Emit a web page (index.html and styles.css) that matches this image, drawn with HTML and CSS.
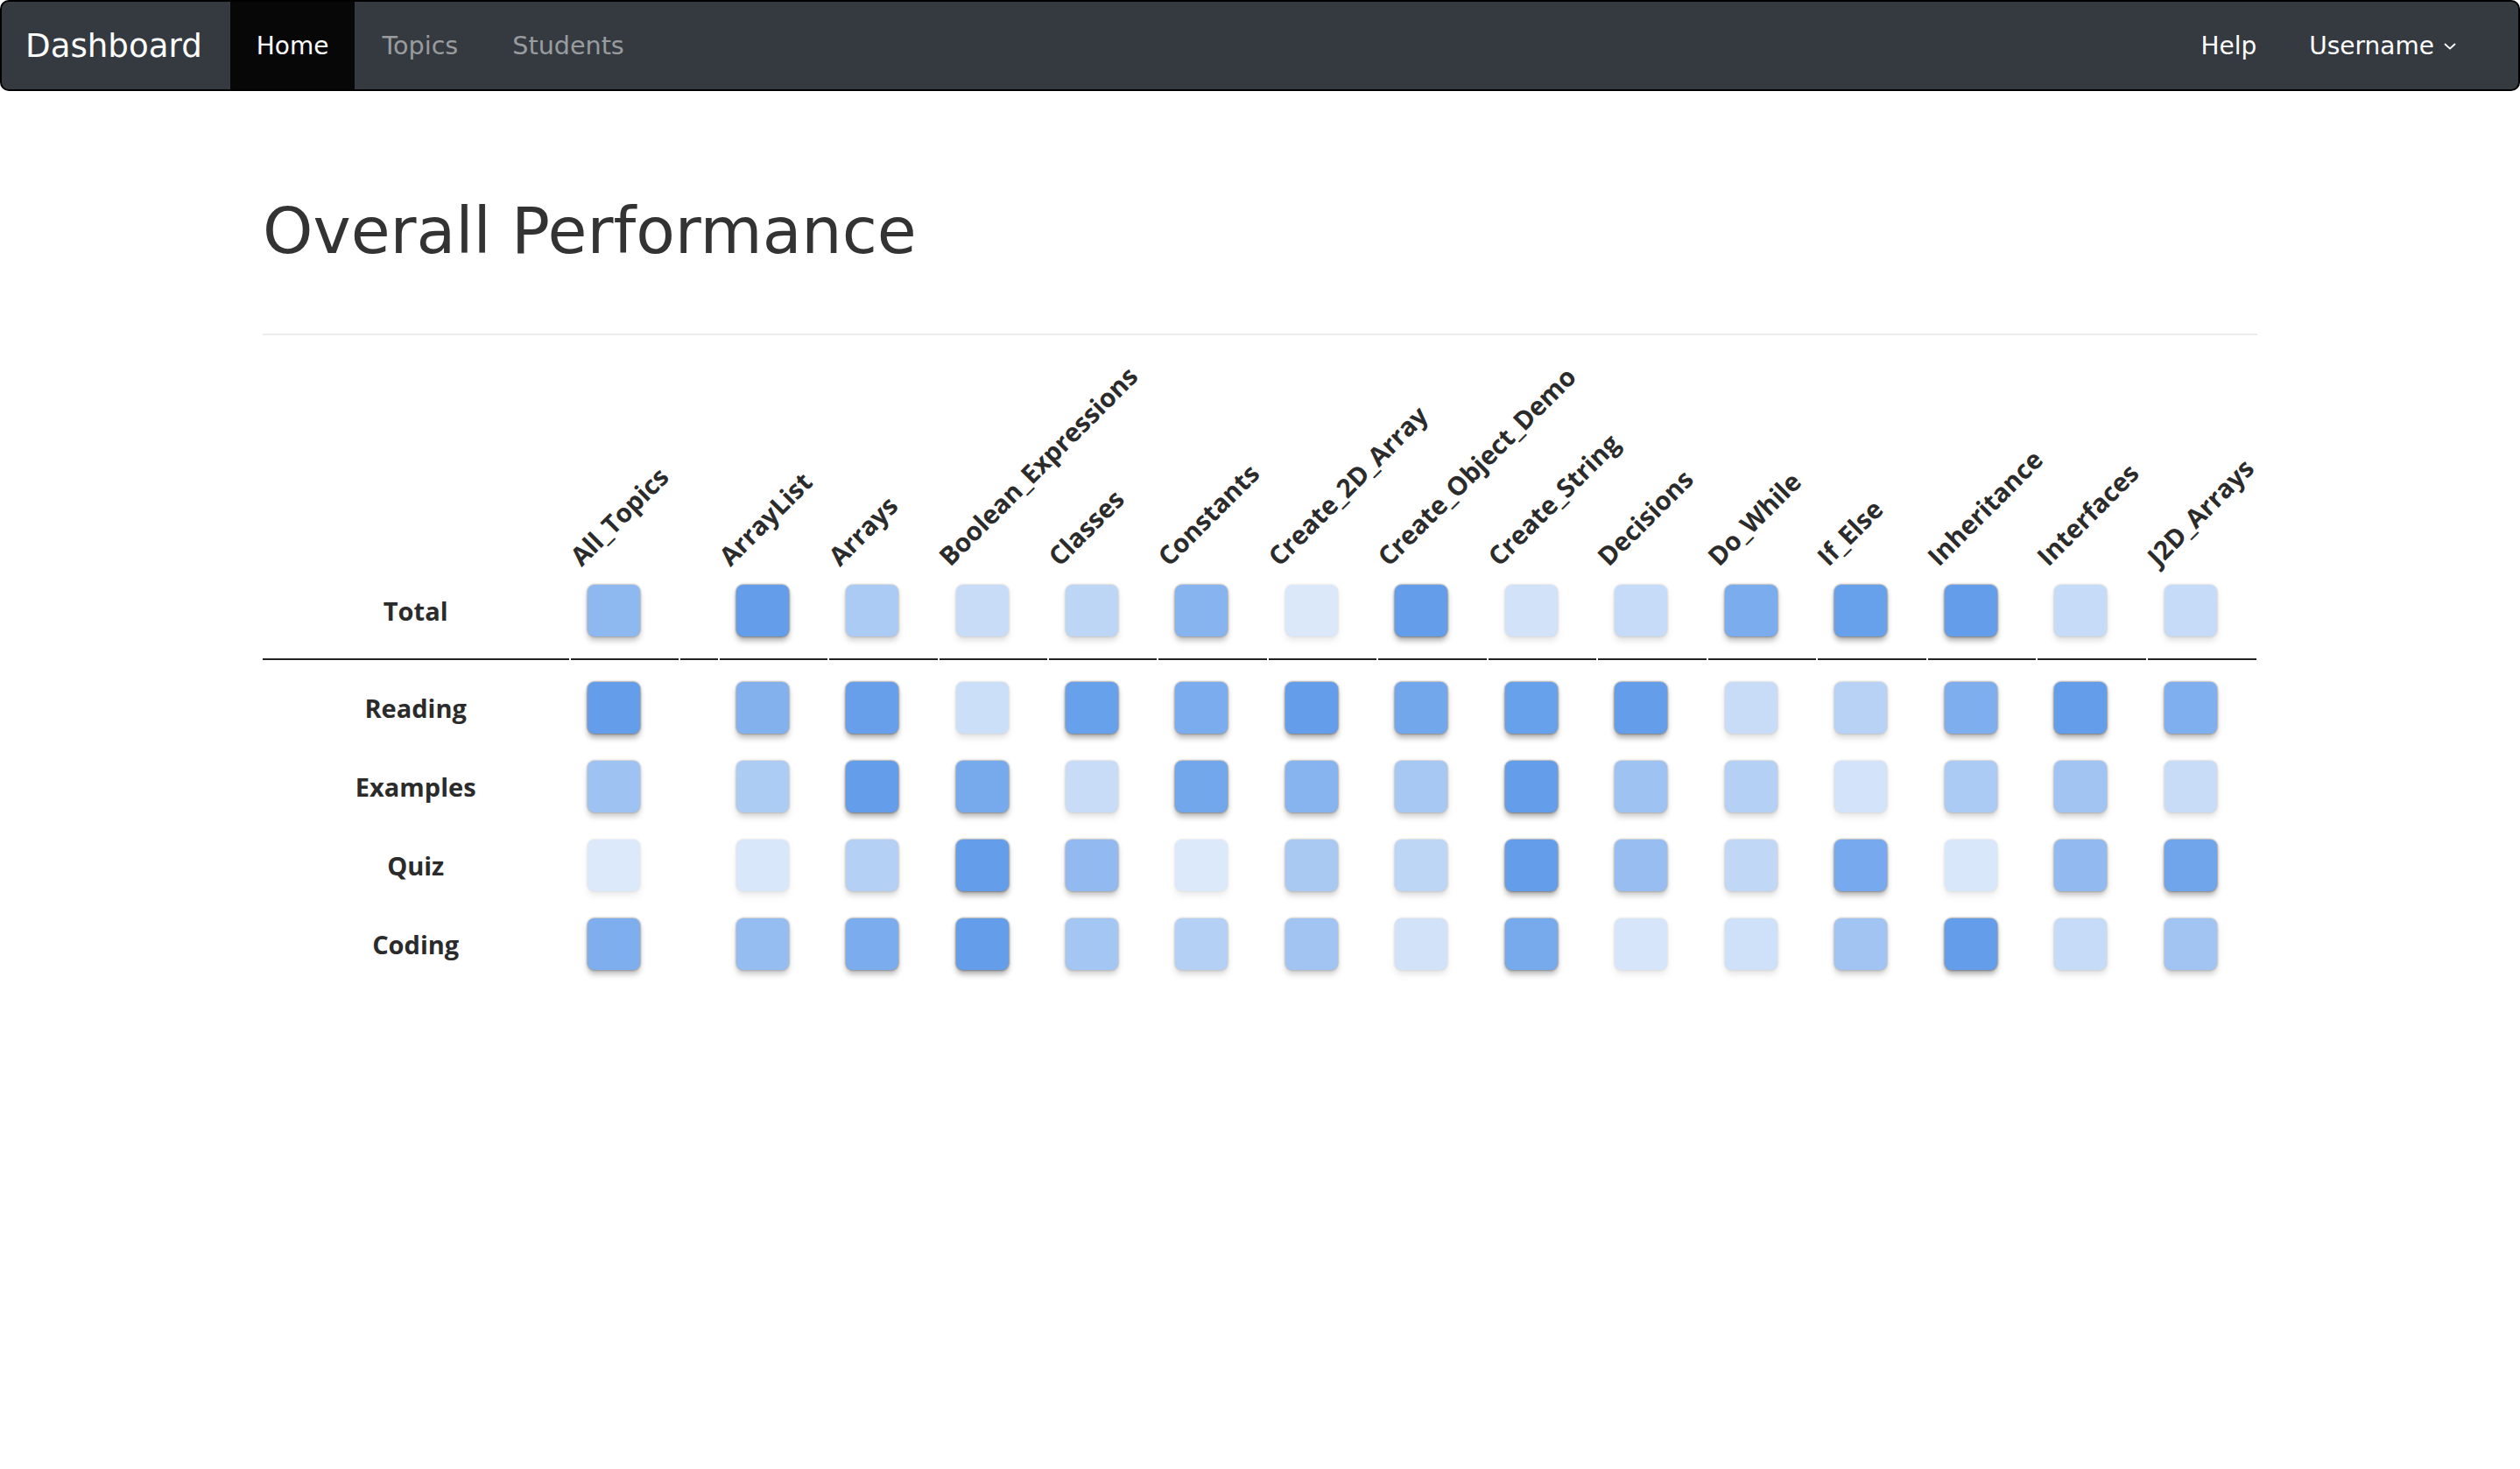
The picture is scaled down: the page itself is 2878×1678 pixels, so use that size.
FILE: index.html
```html
<!DOCTYPE html>
<html lang="en">
<head>
<meta charset="utf-8">
<title>Dashboard</title>
<link rel="stylesheet" href="styles.css">
</head>
<body>
<nav class="navbar">
  <a class="brand" href="#">Dashboard</a>
  <ul class="nav nav-main">
    <li class="nav-item active"><a href="#">Home</a></li>
    <li class="nav-item muted"><a href="#">Topics</a></li>
    <li class="nav-item muted"><a href="#">Students</a></li>
  </ul>
  <ul class="nav nav-right">
    <li class="nav-item"><a href="#">Help</a></li>
    <li class="nav-item"><a href="#">Username<svg class="caret" viewBox="0 0 14 8" width="14" height="8"><polyline points="1.5,1.5 7,6.5 12.5,1.5" fill="none" stroke="#fff" stroke-width="1.8" stroke-linecap="round" stroke-linejoin="round"/></svg></a></li>
  </ul>
</nav>

<main class="container">
  <h1 class="title">Overall Performance</h1>
  <hr class="divider">
  <table class="heatmap">
    <colgroup>
      <col class="c-label"><col class="c-topic"><col class="c-spacer">
      <col class="c-topic"><col class="c-topic"><col class="c-topic"><col class="c-topic"><col class="c-topic"><col class="c-topic"><col class="c-topic">
      <col class="c-topic"><col class="c-topic"><col class="c-topic"><col class="c-topic"><col class="c-topic"><col class="c-topic"><col class="c-topic">
    </colgroup>
    <thead>
      <tr class="head-row">
        <th></th>
        <th class="rot-th"><div class="rot">All_Topics</div></th>
        <th></th>
        <th class="rot-th"><div class="rot">ArrayList</div></th>
        <th class="rot-th"><div class="rot">Arrays</div></th>
        <th class="rot-th"><div class="rot">Boolean_Expressions</div></th>
        <th class="rot-th"><div class="rot">Classes</div></th>
        <th class="rot-th"><div class="rot">Constants</div></th>
        <th class="rot-th"><div class="rot">Create_2D_Array</div></th>
        <th class="rot-th"><div class="rot">Create_Object_Demo</div></th>
        <th class="rot-th"><div class="rot">Create_String</div></th>
        <th class="rot-th"><div class="rot">Decisions</div></th>
        <th class="rot-th"><div class="rot">Do_While</div></th>
        <th class="rot-th"><div class="rot">If_Else</div></th>
        <th class="rot-th"><div class="rot">Inheritance</div></th>
        <th class="rot-th"><div class="rot">Interfaces</div></th>
        <th class="rot-th"><div class="rot">J2D_Arrays</div></th>
      </tr>
      <tr class="total-row">
        <th class="row-label">Total</th>
        <td><div class="sq" style="opacity:.72"></div></td>
        <td></td>
        <td><div class="sq" style="opacity:1"></div></td>
        <td><div class="sq" style="opacity:.53"></div></td>
        <td><div class="sq" style="opacity:.35"></div></td>
        <td><div class="sq" style="opacity:.42"></div></td>
        <td><div class="sq" style="opacity:.77"></div></td>
        <td><div class="sq" style="opacity:.23"></div></td>
        <td><div class="sq" style="opacity:1"></div></td>
        <td><div class="sq" style="opacity:.29"></div></td>
        <td><div class="sq" style="opacity:.36"></div></td>
        <td><div class="sq" style="opacity:.85"></div></td>
        <td><div class="sq" style="opacity:.97"></div></td>
        <td><div class="sq" style="opacity:1"></div></td>
        <td><div class="sq" style="opacity:.37"></div></td>
        <td><div class="sq" style="opacity:.36"></div></td>
      </tr>
    </thead>
    <tbody>
      <tr>
        <th class="row-label">Reading</th>
        <td><div class="sq" style="opacity:1"></div></td>
        <td></td>
        <td><div class="sq" style="opacity:.8"></div></td>
        <td><div class="sq" style="opacity:.98"></div></td>
        <td><div class="sq" style="opacity:.32"></div></td>
        <td><div class="sq" style="opacity:.97"></div></td>
        <td><div class="sq" style="opacity:.85"></div></td>
        <td><div class="sq" style="opacity:1"></div></td>
        <td><div class="sq" style="opacity:.9"></div></td>
        <td><div class="sq" style="opacity:.97"></div></td>
        <td><div class="sq" style="opacity:1"></div></td>
        <td><div class="sq" style="opacity:.35"></div></td>
        <td><div class="sq" style="opacity:.46"></div></td>
        <td><div class="sq" style="opacity:.83"></div></td>
        <td><div class="sq" style="opacity:1"></div></td>
        <td><div class="sq" style="opacity:.82"></div></td>
      </tr>
      <tr>
        <th class="row-label">Examples</th>
        <td><div class="sq" style="opacity:.62"></div></td>
        <td></td>
        <td><div class="sq" style="opacity:.52"></div></td>
        <td><div class="sq" style="opacity:1"></div></td>
        <td><div class="sq" style="opacity:.87"></div></td>
        <td><div class="sq" style="opacity:.35"></div></td>
        <td><div class="sq" style="opacity:.9"></div></td>
        <td><div class="sq" style="opacity:.77"></div></td>
        <td><div class="sq" style="opacity:.56"></div></td>
        <td><div class="sq" style="opacity:1"></div></td>
        <td><div class="sq" style="opacity:.62"></div></td>
        <td><div class="sq" style="opacity:.48"></div></td>
        <td><div class="sq" style="opacity:.28"></div></td>
        <td><div class="sq" style="opacity:.53"></div></td>
        <td><div class="sq" style="opacity:.6"></div></td>
        <td><div class="sq" style="opacity:.35"></div></td>
      </tr>
      <tr>
        <th class="row-label">Quiz</th>
        <td><div class="sq" style="opacity:.22"></div></td>
        <td></td>
        <td><div class="sq" style="opacity:.24"></div></td>
        <td><div class="sq" style="opacity:.48"></div></td>
        <td><div class="sq" style="opacity:1"></div></td>
        <td><div class="sq" style="opacity:.7"></div></td>
        <td><div class="sq" style="opacity:.22"></div></td>
        <td><div class="sq" style="opacity:.55"></div></td>
        <td><div class="sq" style="opacity:.42"></div></td>
        <td><div class="sq" style="opacity:1"></div></td>
        <td><div class="sq" style="opacity:.66"></div></td>
        <td><div class="sq" style="opacity:.4"></div></td>
        <td><div class="sq" style="opacity:.88"></div></td>
        <td><div class="sq" style="opacity:.24"></div></td>
        <td><div class="sq" style="opacity:.7"></div></td>
        <td><div class="sq" style="opacity:.92"></div></td>
      </tr>
      <tr>
        <th class="row-label">Coding</th>
        <td><div class="sq" style="opacity:.83"></div></td>
        <td></td>
        <td><div class="sq" style="opacity:.67"></div></td>
        <td><div class="sq" style="opacity:.85"></div></td>
        <td><div class="sq" style="opacity:1"></div></td>
        <td><div class="sq" style="opacity:.58"></div></td>
        <td><div class="sq" style="opacity:.48"></div></td>
        <td><div class="sq" style="opacity:.6"></div></td>
        <td><div class="sq" style="opacity:.29"></div></td>
        <td><div class="sq" style="opacity:.87"></div></td>
        <td><div class="sq" style="opacity:.26"></div></td>
        <td><div class="sq" style="opacity:.3"></div></td>
        <td><div class="sq" style="opacity:.6"></div></td>
        <td><div class="sq" style="opacity:1"></div></td>
        <td><div class="sq" style="opacity:.36"></div></td>
        <td><div class="sq" style="opacity:.6"></div></td>
      </tr>
    </tbody>
  </table>
</main>
</body>
</html>
```

FILE: styles.css
```css
* {
  box-sizing: border-box;
}

html, body {
  margin: 0;
  padding: 0;
  background: #fff;
}

body {
  font-family: "DejaVu Sans", "Liberation Sans", sans-serif;
  color: #333;
}

a {
  text-decoration: none;
  color: inherit;
}

/* ---------- navbar ---------- */
.navbar {
  display: flex;
  align-items: stretch;
  height: 104px;
  padding: 0 41px 0 27px;
  background: #343a40;
  border: 2px solid #000;
  border-radius: 10px;
}

.brand {
  display: flex;
  align-items: center;
  margin-right: 32px;
  font-size: 37.2px;
  color: #fff;
}

.nav {
  display: flex;
  align-items: stretch;
  list-style: none;
  margin: 0;
  padding: 0;
}

.nav-right {
  margin-left: auto;
}

.nav-item a {
  display: flex;
  align-items: center;
  height: 100%;
  padding: 0 30px;
  font-size: 28px;
  color: #fff;
}

.nav-item.muted a {
  color: rgba(255, 255, 255, 0.5);
  font-size: 28.6px;
  padding: 0 31px;
}

.nav-item.active a {
  background: #070707;
  color: #fff;
}

.caret {
  margin-left: 11px;
  margin-top: 2px;
}

/* ---------- content ---------- */
.container {
  width: 2278px;
  margin: 0 auto;
}

.title {
  margin: 116px 0 73px;
  font-size: 73px;
  font-weight: 400;
  line-height: 1.2;
  color: #333;
}

.divider {
  margin: 0;
  border: 0;
  border-top: 2px solid #ececec;
}

/* ---------- heatmap table ---------- */
.heatmap {
  table-layout: fixed;
  width: 2281px;
  margin-left: -2.5px;
  border-collapse: separate;
  border-spacing: 2.5px 0;
  font-family: "Open Sans", "Liberation Sans", sans-serif;
  color: #2b2b2b;
}

.c-label { width: 349px; }
.c-topic { width: 123px; }
.c-spacer { width: 42px; }

.head-row th {
  height: 268px;
  padding: 0 0 0 15px;
  vertical-align: bottom;
  text-align: left;
}

.rot {
  width: 0;
  height: 30px;
  line-height: 30px;
  white-space: nowrap;
  font-size: 29.5px;
  font-weight: 700;
  transform: rotate(-45deg);
  transform-origin: 0 100%;
}

.row-label {
  font-size: 29px;
  font-weight: 700;
  text-align: center;
  vertical-align: middle;
}

.heatmap td {
  padding: 15.5px 0 15.5px 19px;
  vertical-align: middle;
}

.heatmap tbody th {
  padding: 15.5px 0;
}

.heatmap tbody tr:first-child td,
.heatmap tbody tr:first-child th {
  padding-top: 25.5px;
}

.total-row td,
.total-row th {
  padding-top: 17px;
  padding-bottom: 25px;
  border-bottom: 2px solid #222;
}

.sq {
  width: 60px;
  height: 59px;
  border-radius: 8px;
  background: #649eeb;
  box-shadow: 0 0 2px 1px rgba(0, 0, 0, 0.32), 0 5px 6px rgba(0, 0, 0, 0.3);
}
```
